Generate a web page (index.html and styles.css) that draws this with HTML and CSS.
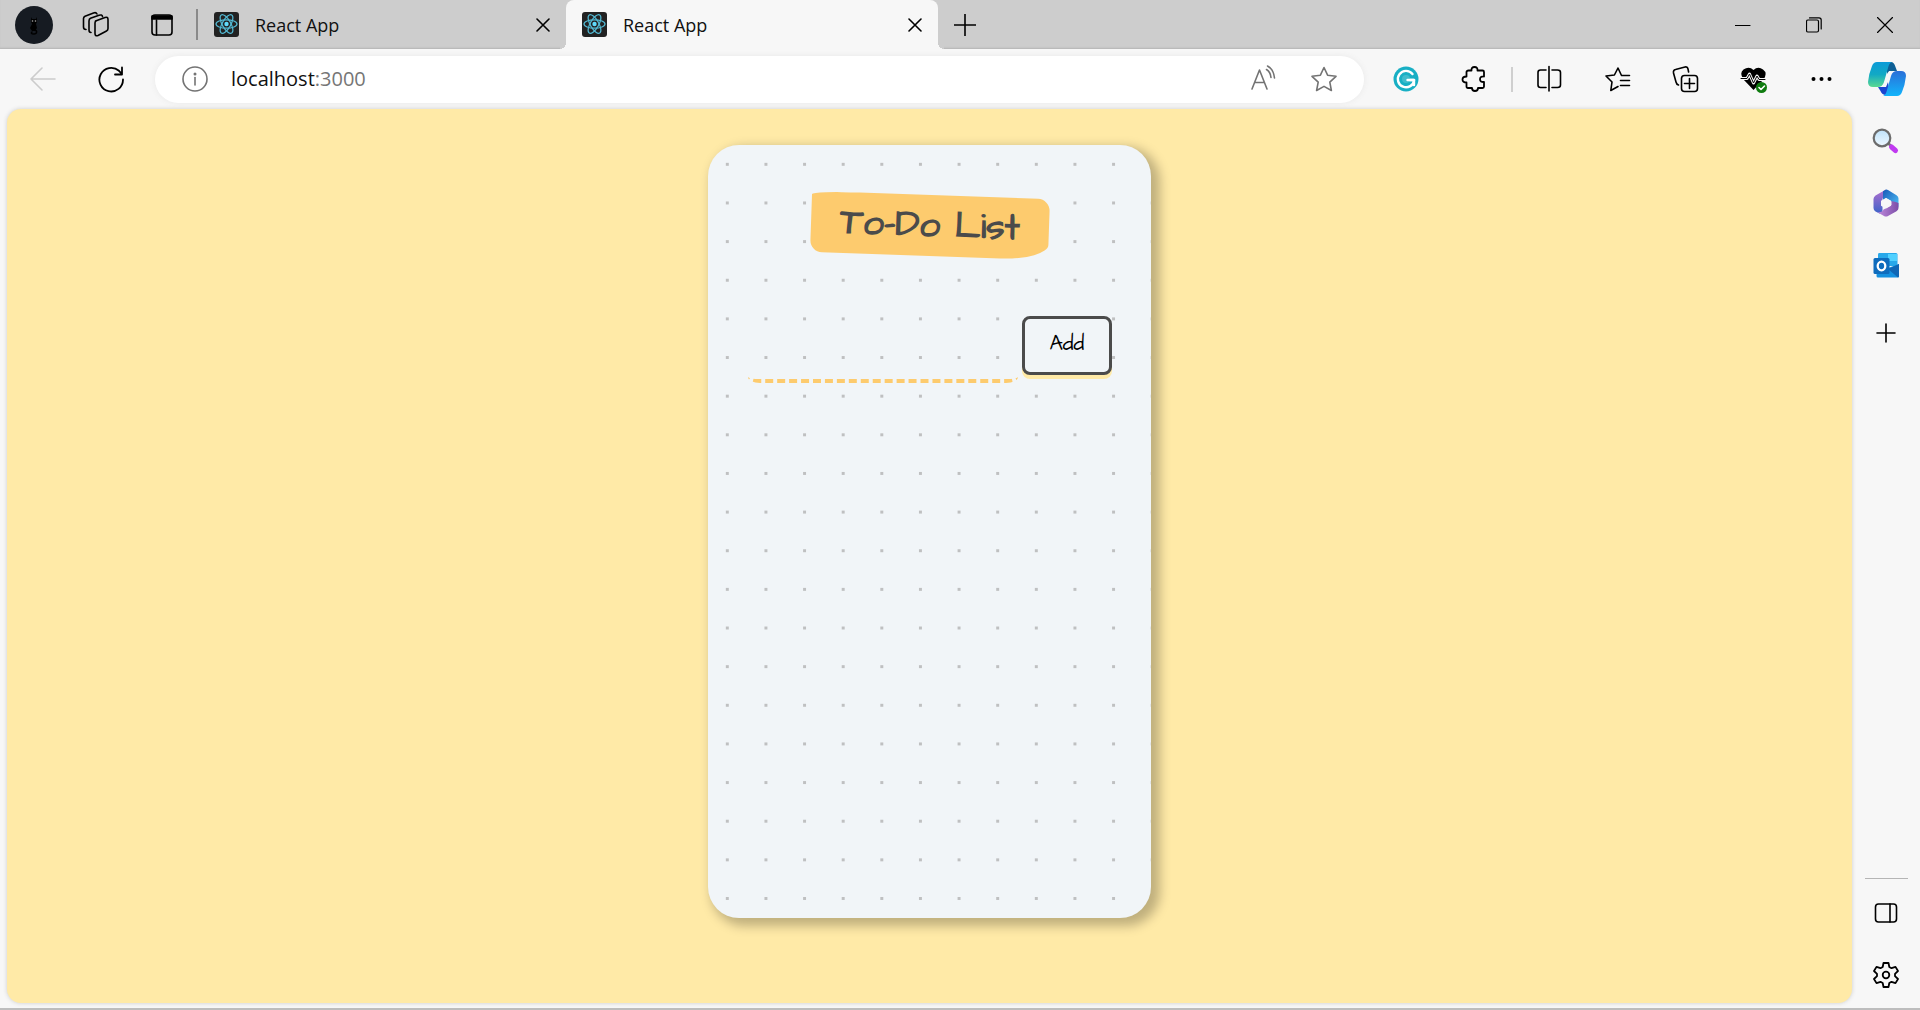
FILE: index.html
```html
<!DOCTYPE html>
<html lang="en">
<head>
<meta charset="utf-8">
<title>React App</title>
<link rel="stylesheet" href="styles.css">
</head>
<body>
<svg class="defs" aria-hidden="true">
  <symbol id="react" viewBox="0 0 25 25">
    <rect width="25" height="25" rx="3" fill="#222"/>
    <g fill="none" stroke="#53b9d3" stroke-width="1.2">
      <ellipse cx="12.500" cy="12" rx="10.500" ry="4.200"/>
      <ellipse cx="12.500" cy="12" rx="10.500" ry="4.200" transform="rotate(60 12.500 12)"/>
      <ellipse cx="12.500" cy="12" rx="10.500" ry="4.200" transform="rotate(120 12.500 12)"/>
    </g>
    <circle cx="12.500" cy="12" r="2.200" fill="#61dafb"/>
  </symbol>
  <symbol id="cross" viewBox="0 0 14 14"><path d="M1 1l12 12M13 1L1 13"/></symbol>
</svg>

<header class="tabstrip">
  <div class="strip-tools">
    <button class="icon-btn avatar" aria-label="Profile">
      <svg width="38" height="38" viewBox="0 0 38 38"><circle cx="19" cy="19" r="19" fill="#161b22"/><path d="M16 11l1 2h4l1-2v5l-1 2 1 4-2 3h-3l-2-3 2-4-1-2z" fill="#000"/><path d="M19 24c4 0 3 4 0 4s-3-1-2-2" fill="none" stroke="#000" stroke-width="1.500"/><circle cx="17.500" cy="15" r=".8" fill="#aaa"/><circle cx="20.500" cy="15" r=".8" fill="#aaa"/></svg>
    </button>
    <button class="icon-btn" aria-label="Workspaces">
      <svg width="28" height="28" viewBox="0 0 28 28"><path d="M13.500 10l9.500-3.500q3-1 3 2v9q0 1.800-1.500 2.500L16 24.500q-3 1-3-2V12q0-1.500 1-2zM9 21.500q-2 0-2-2.500v-9q0-2 1.500-2.700L17 4.300q3-1 3.500 1.200M4 18.500q-2.500 0-2.500-2.500V7.500Q1.500 6 3 5.200L11.500 2q2.500-1 3.500 1"/></svg>
    </button>
    <button class="icon-btn" aria-label="Tab actions">
      <svg width="28" height="28" viewBox="0 0 28 28"><rect x="4" y="4" width="20" height="20" rx="3"/><path d="M4 5h20v3H4z" fill="#000"/><path d="M8.500 9v15"/></svg>
    </button>
  </div>
  <span class="strip-divider"></span>
  <div class="tab">
    <svg class="favicon"><use href="#react"/></svg>
    <span class="tab-title">React App</span>
    <button class="icon-btn" aria-label="Close tab"><svg width="14" height="14"><use href="#cross"/></svg></button>
  </div>
  <div class="tab tab-active">
    <svg class="favicon"><use href="#react"/></svg>
    <span class="tab-title">React App</span>
    <button class="icon-btn" aria-label="Close tab"><svg width="14" height="14"><use href="#cross"/></svg></button>
  </div>
  <button class="icon-btn new-tab" aria-label="New tab"><svg width="22" height="22" viewBox="0 0 22 22"><path d="M11 0v22M0 11h22"/></svg></button>
  <div class="window-controls">
    <button class="icon-btn" aria-label="Minimize"><svg width="16" height="16" viewBox="0 0 16 16"><path d="M0 8.500h15"/></svg></button>
    <button class="icon-btn" aria-label="Restore"><svg width="16" height="16" viewBox="0 0 16 16"><rect x=".5" y="3" width="12" height="12" rx="1.500"/><path d="M3.500.9h9.500q2.200 0 2.200 2.200V12"/></svg></button>
    <button class="icon-btn" aria-label="Close"><svg width="16" height="16" viewBox="0 0 16 16"><path d="M.5.5l15 15M15.500.5l-15 15"/></svg></button>
  </div>
</header>

<nav class="toolbar">
  <div class="nav-buttons">
    <button class="icon-btn back" aria-label="Back" disabled><svg width="28" height="28" viewBox="0 0 28 28"><path d="M26 14H2M13 3L2 14l11 11"/></svg></button>
    <button class="icon-btn" aria-label="Refresh"><svg width="28" height="28" viewBox="0 0 28 28"><path d="M26 14.500a11.800 11.800 0 1 1-4-8.700L24.500 8.500M25 2.500v7h-7" stroke-width="1.800"/></svg></button>
  </div>
  <div class="address">
    <button class="icon-btn gray" aria-label="Site information"><svg width="28" height="28" viewBox="0 0 28 28"><circle cx="14" cy="14" r="12"/><path d="M14 12.500V20"/><circle cx="14" cy="9" r=".7"/></svg></button>
    <span class="url">localhost<span class="port">:3000</span></span>
    <button class="icon-btn gray" aria-label="Read aloud"><svg width="28" height="28" viewBox="0 0 28 28"><path d="M3 24L10.500 5 18 24M6 17.500h9.500M17.500 4.500q4 2.500 4.500 8M18.500 1q6 3 7 12"/></svg></button>
    <button class="icon-btn gray" aria-label="Add to favorites"><svg width="28" height="28" viewBox="0 0 28 28"><path d="M14 2.500l3.600 7.700 8.400 1.100-6.200 5.800 1.600 8.400-7.400-4.100-7.400 4.100 1.600-8.400L2 11.300l8.400-1.100z"/></svg></button>
  </div>
  <div class="tool-group">
    <button class="icon-btn" aria-label="Grammarly"><svg width="28" height="28" viewBox="0 0 28 28"><circle cx="14" cy="14" r="12.500" fill="#18afc4" stroke="none"/><path d="M20.500 9a8.200 8.200 0 1 0 1.700 6h-6.500M22 20v-5" stroke="#fff" stroke-width="2.400"/><circle cx="14" cy="14" r="4" fill="#3fbccd" stroke="none"/><path d="M15.500 15h6" stroke="#fff" stroke-width="2.400"/></svg></button>
    <button class="icon-btn" aria-label="Extensions"><svg width="28" height="28" viewBox="0 0 28 28"><path d="M8.500 5.500h3q-.3-3.500 3-3.500t3 3.500h5q1.500 0 1.500 1.500v4.500q-4-.3-4 2.700t4 2.800v4.500q0 1.500-1.500 1.500h-4.500q0 3-3 3t-3-3H8q-1.500 0-1.500-1.500v-4q-4 0-4-3t4-3V7q0-1.500 2-1.500z" stroke-width="1.800"/></svg></button>
  </div>
  <span class="tool-divider"></span>
  <div class="tool-group">
    <button class="icon-btn" aria-label="Split screen"><svg width="28" height="28" viewBox="0 0 28 28"><path d="M14 1.500v24.500M11 5H5.500Q3 5 3 7.500v12.500q0 2.500 2.500 2.500H11M17 5h5.500Q25.500 5 25.500 7.500v12.500q0 2.500-3 2.500H17"/></svg></button>
    <button class="icon-btn" aria-label="Favorites"><svg width="28" height="28" viewBox="0 0 28 28"><path d="M18.500 10.500L15 3l-3.600 7L3 11l6 6-1.200 8.500 7.200-4M17.500 15.500h9M17.500 20.500h9M18.500 10.500h8"/></svg></button>
    <button class="icon-btn" aria-label="Collections"><svg width="28" height="28" viewBox="0 0 28 28"><rect x="10.500" y="10.500" width="16" height="16" rx="3"/><path d="M18.500 13.500v10M13.500 18.500h10M7.500 20q-2-.5-2.500-3L2.500 8q-.5-3 2-3.500L14 2q2.500-.5 3 2l.6 3"/></svg></button>
    <button class="icon-btn" aria-label="Browser essentials"><svg width="28" height="28" viewBox="0 0 28 28"><path d="M14.500 25L4.500 14.500Q0 8 4.500 4.500 10 1 14.500 5q4.500-4 9.500-.5Q29 8 24.500 14.500z" fill="#000" stroke="none"/><path d="M1 13.500h7l2.500-4.500 4 9 3.500-7 2 3.500h7" stroke="#f7f7f7" stroke-width="3"/><path d="M2 13.500h6l2.500-4.500 4 9 3.500-7 2 3.500h6" stroke-width="1"/><circle cx="22.500" cy="22.500" r="5.500" fill="#107c10" stroke="none"/><path d="M20 22.500l2 2 3.500-3.500" stroke="#fff"/></svg></button>
    <button class="icon-btn" aria-label="Settings and more"><svg width="28" height="28" viewBox="0 0 28 28"><g fill="#000" stroke="none"><circle cx="6.500" cy="14" r="2"/><circle cx="14.500" cy="14" r="2"/><circle cx="22.500" cy="14" r="2"/></g></svg></button>
  </div>
  <button class="icon-btn copilot" aria-label="Copilot">
    <svg width="38" height="36" viewBox="0 0 38 36">
      <defs>
        <linearGradient id="cpA" x1="0" y1="0" x2="0" y2="1"><stop offset="0" stop-color="#0b9bd8"/><stop offset=".5" stop-color="#12a9c4"/><stop offset="1" stop-color="#5ad992"/></linearGradient>
        <linearGradient id="cpB" x1="0" y1="0" x2="0" y2="1"><stop offset="0" stop-color="#2a6fd8"/><stop offset="1" stop-color="#12b4fb"/></linearGradient>
      </defs>
      <g stroke="none">
        <path d="M19 1h4q3 0 4.500 5l1.500 4h-5q-4 0-5 3z" fill="#0e5f95"/>
        <path d="M10 26h8l2-5 2 13h-4q-4 0-5.500-4z" fill="#1a45d0"/>
        <path d="M9 1h15q-3 1-4 6l-4 14q-1.500 5-6 5H5q-5 0-5-5Q1 12 4 5q1.500-4 5-4z" fill="url(#cpA)"/>
        <path d="M29 10h4q5 0 5 5-1 9-4 16-1.500 4-5 4H15q3-1 4-6l4-14q1.500-5 6-5z" fill="url(#cpB)"/>
        <path d="M24 10h-3l-4.500 11q-1.500 5-5 5h4q2.500 0 3.500-4l3-8q1-4 2-4z" fill="#f7f7f7"/>
      </g>
    </svg>
  </button>
</nav>

<div class="window-body">
  <main class="page">
    <section class="card">
      <h1 class="heading">To-Do List</h1>
      <form class="entry">
        <input class="entry-input" type="text" aria-label="New item">
        <button class="add" type="button">Add</button>
      </form>
    </section>
  </main>
  <aside class="sidebar">
    <button class="icon-btn" aria-label="Search"><svg width="28" height="28" viewBox="0 0 28 28">
      <defs><linearGradient id="lens" x1="0" y1="0" x2="0" y2="1"><stop offset="0" stop-color="#bfe2fa"/><stop offset="1" stop-color="#eef8ff"/></linearGradient></defs>
      <path d="M16 16l4 4" stroke="#777" stroke-width="2.500"/><path d="M19.500 20l4 3.500" stroke="#c03af0" stroke-width="5"/><circle cx="10" cy="11" r="8.300" fill="url(#lens)" stroke="#6c6c6c" stroke-width="2.200"/></svg></button>
    <button class="icon-btn" aria-label="Microsoft 365"><svg width="28" height="28" viewBox="0 0 28 28"><defs><linearGradient id="mA" x1="0" y1="0" x2="0" y2="1"><stop offset="0" stop-color="#b26fcf"/><stop offset="1" stop-color="#3c63c8"/></linearGradient><linearGradient id="mB" x1="0" y1="0" x2="1" y2="1"><stop offset="0" stop-color="#1758b8"/><stop offset="1" stop-color="#4fc3f7"/></linearGradient><linearGradient id="mC" x1="0" y1="0" x2="1" y2="0"><stop offset="0" stop-color="#c18bdd"/><stop offset="1" stop-color="#7c4ea8"/></linearGradient></defs>
      <g stroke="none"><path d="M14 .5L3.500 6.500Q1.500 8 1.500 10v9q0 2 2 3.500l4 2q3 0 3-3V10z" fill="url(#mA)"/><path d="M14 .5l-3 1.700V11l3-2 5 3 7.500 6V9.500q0-2-2-3.200L16 1q-1-.7-2-.5z" fill="url(#mB)"/><path d="M26.500 14v5q0 2-2 3.300L16 27q-2 1-4 0l-7-4q5 1 6.500-2.500l3-1.500 5-3V12q5 1 7 2z" fill="url(#mC)"/><path d="M14 9l5 2.700v5L14 19.500l-5-2.800v-5z" fill="#f7f7f7"/></g></svg></button>
    <button class="icon-btn" aria-label="Outlook"><svg width="28" height="28" viewBox="0 0 28 28"><g stroke="none"><path d="M7 2h17q1.500 0 1.500 1.500V15H6V3.500Q6 2 7 2z" fill="#28a8ea"/><path d="M16 3h9v7h-9z" fill="#50d0ff"/><path d="M7 8h9v8H7z" fill="#0a4d91"/><path d="M5 15l11 2 11-4v12q0 1.500-1.500 1.500H6q-1.500 0-1.500-1.500z" fill="#1590df"/><path d="M27 13v12q0 1-1 1.500L16 18z" fill="#1066b5"/><rect x="1.500" y="7" width="16" height="16" rx="1.500" fill="#0f6cbd"/></g><ellipse cx="9.500" cy="15" rx="3.800" ry="4.300" stroke="#fff" stroke-width="2.300"/></svg></button>
    <button class="icon-btn customize" aria-label="Customize sidebar"><svg width="28" height="28" viewBox="0 0 28 28"><path d="M14 5v18M5 14h18"/></svg></button>
    <span class="side-divider"></span>
    <button class="icon-btn" aria-label="Hide sidebar"><svg width="28" height="28" viewBox="0 0 28 28"><rect x="3.500" y="5" width="21" height="18" rx="3"/><path d="M18 5v18"/></svg></button>
    <button class="icon-btn" aria-label="Settings"><svg width="28" height="28" viewBox="0 0 28 28"><path d="M11.500 2h5l.8 4 2.200 1.200 4-1.300L26 10l-3 2.800v2.400L26 18l-2.500 4.100-4-1.300-2.200 1.200-.8 4h-5l-.8-4-2.200-1.200-4 1.300L2 18l3-2.800v-2.400L2 10l2.500-4.100 4 1.300L10.700 6z" stroke-width="1.800"/><circle cx="14" cy="14" r="3.300" stroke-width="1.800"/></svg></button>
  </aside>
</div>
</body>
</html>
```
FILE: styles.css
```css
* { box-sizing: border-box; }

body {
  margin: 0;
  min-height: 100vh;
  display: flex;
  flex-direction: column;
  background: #f7f7f7;
  border-bottom: 2px solid #bdbdbd;
  font-family: "Segoe UI", "Open Sans", sans-serif;
  color: #111;
}

.defs { display: none; }

.icon-btn {
  display: flex;
  flex: none;
  padding: 0;
  border: 0;
  background: none;
  color: #000;
}

.icon-btn svg {
  fill: none;
  stroke: currentColor;
  stroke-width: 1.6;
  stroke-linejoin: round;
  stroke-linecap: round;
}

.gray { color: #737373; }

/* Tab strip */
.tabstrip {
  display: flex;
  align-items: center;
  height: 49px;
  background: #cdcdcd;
  box-shadow: inset 0 -2px 2px -1px #b4b4b4;
}

.strip-tools {
  display: flex;
  align-items: center;
  gap: 38px;
  padding-left: 15px;
}

.avatar { margin-right: -9px; }
.avatar svg { stroke: none; }

.strip-divider {
  width: 2px;
  height: 31px;
  margin-left: 20px;
  background: #8a8a8a;
}

.tab {
  display: flex;
  align-items: center;
  width: 368px;
  height: 49px;
  padding: 0 16px;
}

.favicon {
  width: 25px;
  height: 25px;
}

.tab-title {
  flex: 1;
  padding-left: 16px;
  font-size: 18px;
  line-height: 24px;
}

.tab-active {
  position: relative;
  width: 372px;
  background: #f7f7f7;
  border-radius: 8px 8px 0 0;
}

.tab-active::before,
.tab-active::after {
  content: "";
  position: absolute;
  bottom: 0;
  width: 6px;
  height: 6px;
}

.tab-active::before {
  right: 100%;
  background: radial-gradient(circle at 0 0, #cdcdcd 6px, #f7f7f7 6px);
}

.tab-active::after {
  left: 100%;
  background: radial-gradient(circle at 100% 0, #cdcdcd 6px, #f7f7f7 6px);
}

.new-tab { margin-left: 16px; }

.window-controls {
  display: flex;
  gap: 55px;
  margin-left: auto;
  padding-right: 27px;
}

.window-controls svg { stroke-width: 1.2; }

/* Toolbar */
.toolbar {
  display: flex;
  align-items: center;
  height: 60px;
  padding: 0 14px 0 29px;
}

.nav-buttons {
  display: flex;
  gap: 40px;
  margin-right: 30px;
}

.back { color: #ccc; }

.address {
  display: flex;
  align-items: center;
  flex: 1;
  height: 47px;
  padding: 0 26px;
  border-radius: 24px;
  background: #fff;
  box-shadow: 0 0 6px #e9e9e9;
}

.url {
  flex: 1;
  padding-left: 22px;
  font-size: 20px;
  line-height: 28px;
}

.port { color: #767676; }

.address .icon-btn:last-child { margin-left: 33px; }

.tool-group {
  display: flex;
  gap: 40px;
}

.address + .tool-group { margin-left: 28px; }

.tool-divider {
  width: 2px;
  height: 25px;
  margin: 0 22px 0 23px;
  background: #cfcfcf;
}

.copilot { margin-left: 33px; }

/* Window body */
.window-body {
  display: flex;
  flex: 1;
}

.page {
  flex: 1;
  margin: 0 0 5px 7px;
  padding: 36px 0;
  border-radius: 14px;
  background: #ffeaa7;
  box-shadow: 0 0 4px #ccc;
}

.card {
  width: 24%;
  min-width: 400px;
  min-height: 773px;
  margin: 0 auto;
  padding: 50px 39px 39px 40px;
  border-radius: 31px;
  background-color: #f1f5f8;
  background-image: radial-gradient(#bfc0c1 7.2%, transparent 0);
  background-size: 8.72% 5%;
  box-shadow: 6px 5px 11px 3px #00000040;
}

.heading,
.add {
  font-family: "Architects Daughter", "Comic Neue", "Open Sans", sans-serif;
}

.heading {
  width: fit-content;
  margin: 0 auto 60px;
  padding: 5px 29px;
  border-radius: 20% 5% 20% 5% / 5% 20% 25% 20%;
  background: #fdcb6e;
  color: #4b4b4b;
  font-size: 37px;
  line-height: 51px;
  transform: rotate(2deg);
}

.entry {
  display: flex;
  align-items: flex-start;
  gap: 4px;
}

.entry-input {
  flex: 1;
  min-width: 0;
  height: 67px;
  padding: 8px;
  border: 0 solid #fdcb6e;
  border-bottom: 4px dashed #fdcb6e;
  border-radius: 12px / 6px;
  background: transparent;
  font-size: 21px;
  outline: none;
}

.add {
  width: 90px;
  height: 59px;
  padding: 0 0 4px;
  border: 3px solid #4b4b4b;
  border-radius: 8px;
  background: #f1f5f8;
  box-shadow: 0 4px 0 #ffeaa7;
  color: #000;
  font-size: 21px;
}

/* Sidebar */
.sidebar {
  display: flex;
  flex-direction: column;
  align-items: center;
  gap: 34px;
  width: 68px;
  padding: 18px 0 19px;
}

.customize { margin-top: 6px; }

.side-divider {
  width: 43px;
  height: 1px;
  margin: auto 0 -14px;
  background: #b5b5b5;
}
```
